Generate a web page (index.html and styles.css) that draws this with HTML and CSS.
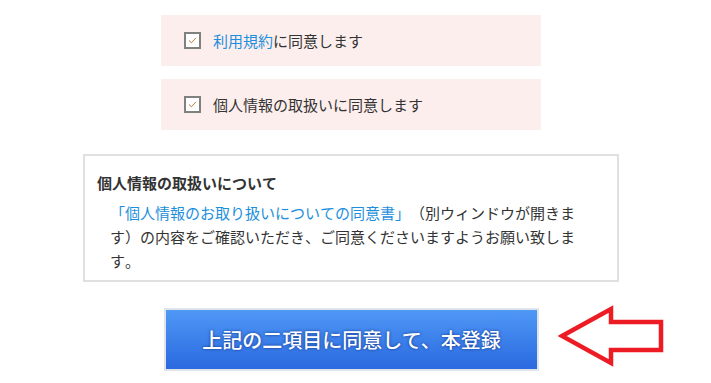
FILE: index.html
```html
<!DOCTYPE html>
<html lang="ja">
<head>
<meta charset="utf-8">
<link rel="stylesheet" href="styles.css">
</head>
<body>
<div class="page">
  <label class="agree">
    <span class="check"><svg viewBox="0 0 16 16" width="16" height="16"><path d="M3.5 7.8 L6.6 10.8 L12.3 4.8" fill="none" stroke="#b9773a" stroke-width="1.2"/></svg></span>
    <span class="agree-text"><a class="link" href="#">利用規約</a>に同意します</span>
  </label>
  <label class="agree">
    <span class="check"><svg viewBox="0 0 16 16" width="16" height="16"><path d="M3.5 7.8 L6.6 10.8 L12.3 4.8" fill="none" stroke="#b9773a" stroke-width="1.2"/></svg></span>
    <span class="agree-text">個人情報の取扱いに同意します</span>
  </label>
  <div class="info">
    <h3 class="info-title">個人情報の取扱いについて</h3>
    <p class="info-body"><a class="link" href="#">「個人情報のお取り扱いについての同意書」</a>（別ウィンドウが開きます）の内容をご確認いただき、ご同意くださいますようお願い致します。</p>
  </div>
  <button class="submit" type="button">上記の二項目に同意して、本登録</button>
</div>
<svg class="arrow" width="112" height="64" viewBox="0 0 112 64">
  <polygon points="4,31 53,4 53,17 103,17 103,45 53,45 53,58" fill="#fff" stroke="#ed1c24" stroke-width="4.5" stroke-linejoin="miter"/>
</svg>
</body>
</html>
```

FILE: styles.css
```css
html, body {
  margin: 0;
  padding: 0;
  background: #fff;
}
body {
  font-family: "Noto Sans CJK JP", "Noto Sans", sans-serif;
  color: #333;
  position: relative;
  width: 711px;
  height: 383px;
  overflow: hidden;
  text-spacing-trim: space-all;
  font-kerning: none;
}
.page {
  width: 702px;
  display: flex;
  flex-direction: column;
  align-items: center;
  padding-top: 15px;
}
.agree {
  width: 380px;
  height: 51px;
  box-sizing: border-box;
  background: #fdeeee;
  display: flex;
  align-items: center;
  padding-left: 23px;
  gap: 12px;
  margin-bottom: 13px;
  font-size: 15px;
}
.agree + .agree {
  margin-bottom: 24px;
}
.check {
  width: 17px;
  height: 17px;
  box-sizing: border-box;
  border: 2px solid #808080;
  background: #fff;
  display: flex;
  align-items: center;
  justify-content: center;
  flex: none;
}
.check svg {
  display: block;
  width: 13px;
  height: 13px;
}
.agree-text {
  line-height: 20px;
}
.link {
  color: #1d8fdc;
  text-decoration: none;
}
.info {
  width: 536px;
  height: 128px;
  box-sizing: border-box;
  border: 2px solid #e0e0e0;
  padding: 16px 12px 0 12px;
  margin-bottom: 26px;
}
.info-title {
  margin: 0;
  font-size: 15px;
  font-weight: 700;
  line-height: 22px;
  color: #333;
}
.info-body {
  margin: 7px 0 0 13px;
  width: 474px;
  font-size: 15px;
  line-height: 24px;
  color: #333;
}
.submit {
  width: 375px;
  height: 63px;
  box-sizing: border-box;
  border: 2px solid #dfe3ea;
  background: linear-gradient(#4f98f6, #2a69df);
  color: #fff;
  font-family: "Noto Sans CJK JP", sans-serif;
  font-size: 20px;
  font-weight: 500;
  text-shadow: 0 0 3px rgba(10, 40, 120, 0.85);
  padding: 0;
  margin-left: 1px;
  text-spacing-trim: space-all;
}
.arrow {
  position: absolute;
  left: 558px;
  top: 305px;
}
```
